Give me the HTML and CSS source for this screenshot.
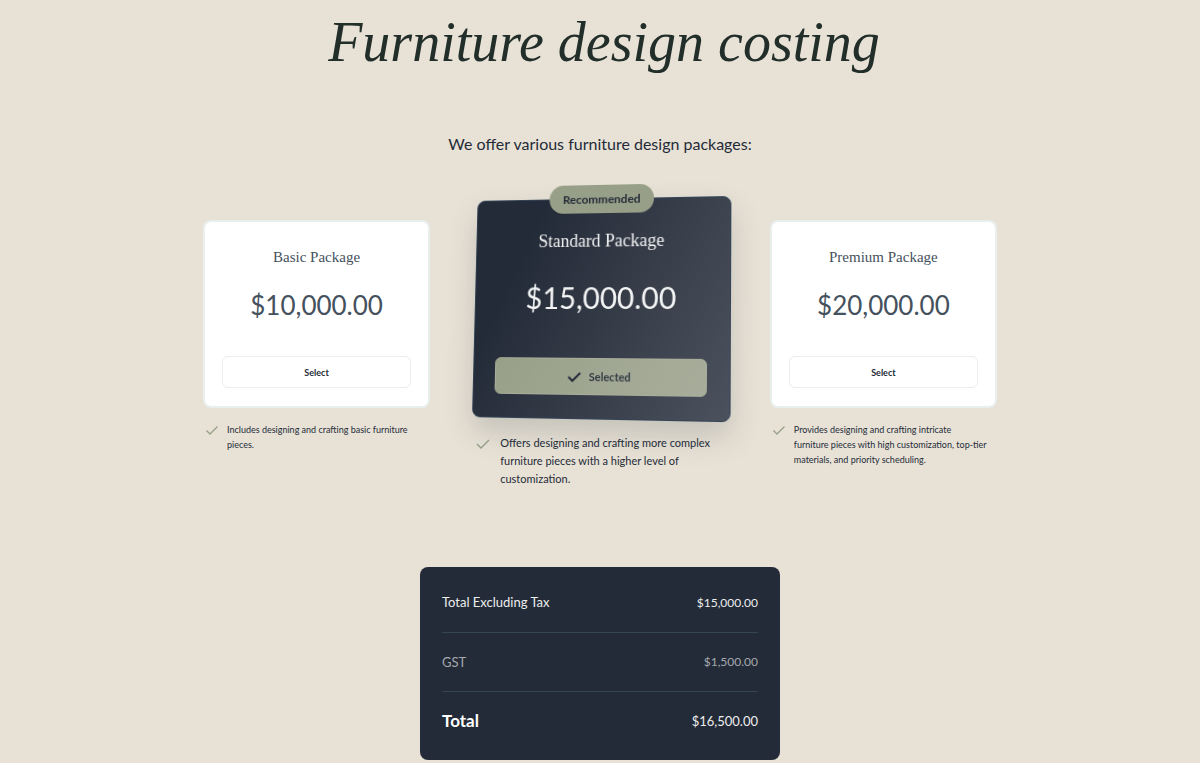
FILE: index.html
```html
<!DOCTYPE html>
<html lang="en">
<head>
<meta charset="utf-8">
<meta name="viewport" content="width=device-width, initial-scale=1">
<title>Furniture design costing</title>
<link rel="stylesheet" href="styles.css">
</head>
<body>
<main class="page">
  <h1 class="page-title">Furniture design costing</h1>
  <p class="intro">We offer various furniture design packages:</p>

  <section class="packages">
    <article class="package">
      <div class="card">
        <h2 class="card-title">Basic Package</h2>
        <p class="price">$10,000.00</p>
        <button class="select" type="button">Select</button>
      </div>
      <ul class="features">
        <li class="feature">
          <svg class="tick" viewBox="0 0 14 12" aria-hidden="true"><path d="M1.5 6.5 5 10 12.5 2.5"/></svg>
          <span>Includes designing and crafting basic furniture pieces.</span>
        </li>
      </ul>
    </article>

    <article class="package recommended">
      <div class="card">
        <span class="badge">Recommended</span>
        <h2 class="card-title">Standard Package</h2>
        <p class="price">$15,000.00</p>
        <button class="select" type="button" aria-pressed="true">
          <svg class="tick tick-bold" viewBox="0 0 14 12" aria-hidden="true"><path d="M1 6 5 10 13 2"/></svg>
          Selected
        </button>
      </div>
      <ul class="features">
        <li class="feature">
          <svg class="tick" viewBox="0 0 14 12" aria-hidden="true"><path d="M1 6 5 10 13 2"/></svg>
          <span>Offers designing and crafting more complex furniture pieces with a higher level of customization.</span>
        </li>
      </ul>
    </article>

    <article class="package">
      <div class="card">
        <h2 class="card-title">Premium Package</h2>
        <p class="price">$20,000.00</p>
        <button class="select" type="button">Select</button>
      </div>
      <ul class="features">
        <li class="feature">
          <svg class="tick" viewBox="0 0 14 12" aria-hidden="true"><path d="M1.5 6.5 5 10 12.5 2.5"/></svg>
          <span>Provides designing and crafting intricate<br>furniture pieces with high customization, top-tier<br>materials, and priority scheduling.</span>
        </li>
      </ul>
    </article>
  </section>

  <section class="summary">
    <table class="totals">
      <tbody>
        <tr><th scope="row">Total Excluding Tax</th><td>$15,000.00</td></tr>
        <tr class="tax"><th scope="row">GST</th><td>$1,500.00</td></tr>
        <tr class="grand"><th scope="row">Total</th><td>$16,500.00</td></tr>
      </tbody>
    </table>
  </section>
</main>
</body>
</html>
```
FILE: styles.css
```css
* { box-sizing: border-box; }

body {
  margin: 0;
  background: #e8e2d6;
  color: #242b38;
  font-family: "Lato", "Liberation Sans", sans-serif;
}

h1, h2, p, ul { margin: 0; padding: 0; }

.page {
  max-width: 826px;
  margin: 0 auto;
  padding: 6px 16px 3px;
}

.page-title {
  color: #222e29;
  font: italic 400 56px/72px "Liberation Serif", serif;
  text-align: center;
  padding-left: 8px;
}

.intro {
  margin-top: 54px;
  font-size: 16px;
  line-height: 24px;
  text-align: center;
}

.packages {
  display: grid;
  grid-template-columns: 7fr 8fr 7fr;
  column-gap: 40px;
  align-items: start;
  margin-top: 41px;
}

.package { padding-top: 23px; }

.card {
  display: flex;
  flex-direction: column;
  align-items: center;
  padding: 25px 17px 18px;
  border: 2px solid #e8efee;
  border-radius: 8px;
  background: #fff;
  color: #45515d;
}

.card-title {
  font: 400 15px/20px "Liberation Serif", serif;
}

.price {
  margin-top: 22px;
  font-size: 26px;
  line-height: 32px;
}

.select {
  display: flex;
  align-items: center;
  justify-content: center;
  gap: 8px;
  width: 100%;
  height: 32px;
  margin-top: 35px;
  border: 1px solid #e8efee;
  border-radius: 6px;
  background: #fff;
  color: #242b38;
  font: 700 9px "Lato", sans-serif;
}

.features {
  list-style: none;
  margin-top: 14px;
  font-size: 9px;
  line-height: 15px;
}

.feature {
  display: flex;
  gap: 8px;
  padding-left: 2px;
}

.tick {
  flex: none;
  width: 14px;
  height: 12px;
  margin-top: 2px;
  fill: none;
  stroke: #98a088;
  stroke-width: 1.4;
}

.tick-bold {
  margin: 0;
  stroke: #242b38;
  stroke-width: 2;
}

.recommended { padding-top: 0; }

.recommended .card {
  position: relative;
  padding: 30px 22px 23px;
  border: 1px solid #344356;
  background: linear-gradient(115deg, #242b38 20%, #4b525d);
  box-shadow: 0 14px 30px rgba(36, 43, 56, 0.18);
  color: #f3f4f4;
  transform: perspective(1000px) rotateY(-10deg) rotateX(5deg);
}

.recommended .card-title {
  font-size: 18px;
  line-height: 24px;
}

.recommended .price {
  margin-top: 27px;
  font-size: 30px;
  line-height: 36px;
}

.recommended .select {
  height: 37px;
  margin-top: 43px;
  border-color: #a9ae9a;
  background: linear-gradient(115deg, #98a088, #a8ad9b);
  color: #333a45;
  font-size: 11px;
}

.badge {
  position: absolute;
  top: -15px;
  left: 50%;
  padding: 0 14px;
  border-radius: 15px;
  background: #989f88;
  color: #242b38;
  font-size: 12px;
  font-weight: 700;
  line-height: 29px;
  transform: translateX(-50%);
}

.recommended .features {
  margin-top: 15px;
  font-size: 11px;
  line-height: 18px;
}

.recommended .feature {
  gap: 10px;
  padding-left: 6px;
}

.recommended .features .tick { margin-top: 4px; }

.summary {
  max-width: 360px;
  margin: 79px auto 0;
  padding: 6px 22px 10px;
  border-radius: 8px;
  background: #242b38;
}

.totals {
  width: 100%;
  border-collapse: collapse;
  color: #eceeee;
  font-size: 12px;
}

.totals th, .totals td {
  height: 59px;
  padding: 0;
  border-bottom: 1px solid #354650;
}

.totals th {
  font-size: 13px;
  font-weight: 400;
  text-align: left;
}

.totals td { text-align: right; }

.totals .tax { color: #a5a9ae; }

.totals .grand th, .totals .grand td { border: 0; }

.totals .grand th {
  color: #fff;
  font-size: 17px;
  font-weight: 700;
}

.totals .grand td { font-size: 13px; }
```
